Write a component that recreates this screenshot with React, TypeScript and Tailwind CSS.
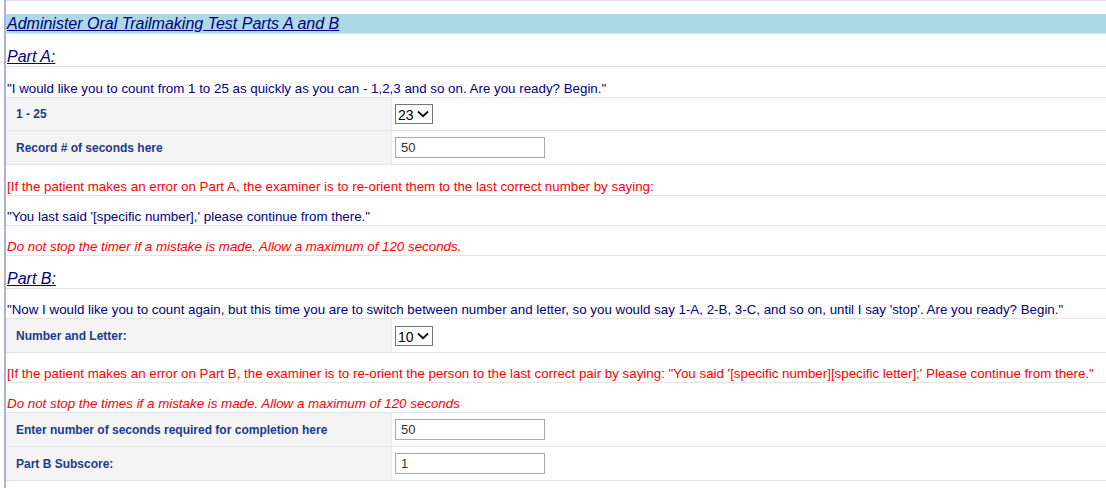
import React from "react"

const line = "border-b border-[#e3e3e3]"

function TextRow({ children, className = "", h = "h-[30px]" }: { children: React.ReactNode; className?: string; h?: string }) {
  return (
    <div className={`${h} ${line} flex items-end pb-[1px] pl-[1px] text-[13.33px] leading-[15px] whitespace-nowrap ${className}`}>
      {children}
    </div>
  )
}

function FieldRow({ label, children, h = "h-[33px]" }: { label: string; children: React.ReactNode; h?: string }) {
  return (
    <div className={`${h} ${line} flex`}>
      <div className="w-[386px] shrink-0 bg-[#f4f4f4] border-r border-[#e8e8e8] flex items-center pl-[10px] text-[12px] font-bold text-[#1b3a8c]">
        {label}
      </div>
      <div className="flex items-center pl-[3px]">{children}</div>
    </div>
  )
}

function Dropdown({ value }: { value: string }) {
  return (
    <div className="relative inline-flex h-[20px] w-[38px] items-center border border-[#767676] bg-white">
      <select
        defaultValue={value}
        className="appearance-none bg-transparent h-full w-full pl-[2px] text-[14px] text-black outline-none"
      >
        <option>{value}</option>
      </select>
      <svg className="absolute right-[3px] top-[5px] pointer-events-none" width="12" height="8" viewBox="0 0 12 8">
        <path d="M1 1.5 L6 6.2 L11 1.5" fill="none" stroke="#111" strokeWidth="1.8" />
      </svg>
    </div>
  )
}

function Field({ value }: { value: string }) {
  return (
    <input
      defaultValue={value}
      className="h-[21px] w-[150px] border border-[#a9a9a9] bg-white px-[5px] text-[13px] text-[#333] outline-none"
    />
  )
}

export default function App() {
  return (
    <div className="w-[1106px] h-[488px] bg-white pl-[4px] overflow-hidden font-['Liberation_Sans',Arial,sans-serif]">
      <div className="border-l-2 border-[#aab2dc] h-full">
        <div className="h-[14px] border-t border-[#e3e3e3]" />
        <div className="h-[20px] bg-[#add8e6] border-b border-[#e3e3e3] flex items-end pl-[1px]">
          <span className="text-[16px] leading-[19px] italic underline text-[#000080]">
            Administer Oral Trailmaking Test Parts A and B
          </span>
        </div>
        <div className={`h-[33px] ${line} flex items-end pl-[1px]`}>
          <span className="text-[16px] leading-[19px] italic underline text-[#000080]">Part A:</span>
        </div>
        <TextRow h="h-[31px]" className="text-[#000080]">
          "I would like you to count from 1 to 25 as quickly as you can - 1,2,3 and so on. Are you ready? Begin."
        </TextRow>
        <FieldRow label="1 - 25">
          <Dropdown value="23" />
        </FieldRow>
        <FieldRow label="Record # of seconds here" h="h-[34px]">
          <Field value="50" />
        </FieldRow>
        <TextRow h="h-[31px]" className="text-[#ff0000]">
          [If the patient makes an error on Part A, the examiner is to re-orient them to the last correct number by saying:
        </TextRow>
        <TextRow className="text-[#000080]">"You last said '[specific number],' please continue from there."</TextRow>
        <TextRow className="text-[#ff0000] italic">Do not stop the timer if a mistake is made. Allow a maximum of 120 seconds.</TextRow>
        <div className={`h-[33px] ${line} flex items-end pl-[1px]`}>
          <span className="text-[16px] leading-[19px] italic underline text-[#000080]">Part B:</span>
        </div>
        <TextRow className="text-[#000080]">
          "Now I would like you to count again, but this time you are to switch between number and letter, so you would say 1-A, 2-B, 3-C, and so on, until I say 'stop'. Are you ready? Begin."
        </TextRow>
        <FieldRow label="Number and Letter:" h="h-[34px]">
          <Dropdown value="10" />
        </FieldRow>
        <TextRow className="text-[#ff0000]">
          [If the patient makes an error on Part B, the examiner is to re-orient the person to the last correct pair by saying: "You said '[specific number][specific letter];' Please continue from there."
        </TextRow>
        <TextRow className="text-[#ff0000] italic">Do not stop the times if a mistake is made. Allow a maximum of 120 seconds</TextRow>
        <FieldRow label="Enter number of seconds required for completion here" h="h-[34px]">
          <Field value="50" />
        </FieldRow>
        <FieldRow label="Part B Subscore:" h="h-[34px]">
          <Field value="1" />
        </FieldRow>
      </div>
    </div>
  )
}
